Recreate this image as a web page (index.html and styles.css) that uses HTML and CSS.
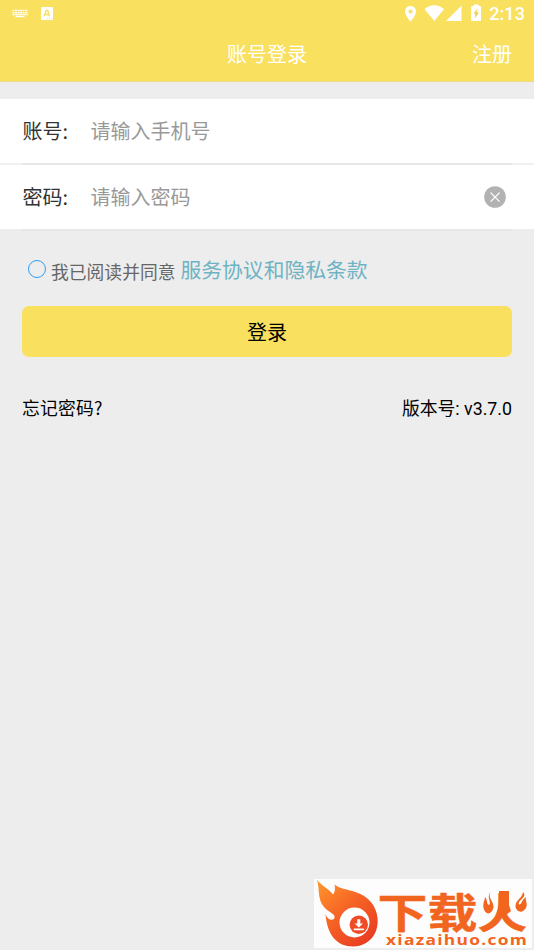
FILE: index.html
```html
<!DOCTYPE html>
<html lang="zh-CN">
<head>
<meta charset="utf-8">
<meta name="viewport" content="width=device-width, initial-scale=1">
<title>账号登录</title>
<link rel="stylesheet" href="styles.css">
</head>
<body>
<header class="header">
  <div class="status">
    <svg class="status-left" viewBox="0 0 60 27" width="60" height="27">
      <path d="M12.5 10.4H28M12.5 12.5H28" stroke="#fff" stroke-width="1.3" stroke-dasharray="1.9 .6"/>
      <path d="M12.5 14.5H28" stroke="#fff" stroke-width="1.3" stroke-dasharray="2.4 .5"/>
      <path d="M15.5 16.5H24.5" stroke="#fff" stroke-width="1.4"/>
      <rect x="41" y="7" width="12" height="13" rx=".8" fill="#fff"/>
      <path d="M44.2 16.3 46.2 10.4H47.6L49.6 16.3M45 14.5H48.8" fill="none" stroke="#f9e05f" stroke-width="1.4"/>
      <path d="M47 18.6H52" stroke="#f9e05f" stroke-width=".8" stroke-dasharray="1.2 .8"/>
    </svg>
    <div class="status-right">
      <svg viewBox="402 0 82 27" width="82" height="27">
        <path fill="#fff" fill-rule="evenodd" d="M410.5 6C407.3 6 405 8.4 405 11.4 405 15.3 410.5 21.5 410.5 21.5S416 15.3 416 11.4C416 8.4 413.7 6 410.5 6ZM410.5 9.4A2 2 0 1 1 410.5 13.4 2 2 0 0 1 410.5 9.4Z"/>
        <path fill="#fff" d="M424.5 9.2C430 3.9 438.500 3.900 444 9.200L434.300 21ZM461.500 5.500V21H446Z"/>
        <path fill="#fff" d="M473.700 4.500H478.700V6H480.200Q481 6 481 6.800V20.200Q481 21 480.200 21H472Q471.200 21 471.200 20.200V6.800Q471.200 6 472 6H473.700Z"/>
        <path fill="#f3cf55" d="M477.500 8.500 473.500 13.800H475.200L474.800 18.200 479 12.400H476.900Z"/>
      </svg>
      <span class="time">2:13</span>
    </div>
  </div>
  <nav class="nav">
    <h1 class="title">账号登录</h1>
    <a class="register">注册</a>
  </nav>
</header>
<main>
  <section class="fields">
    <div class="field"><span class="label">账号:</span><span class="hint">请输入手机号</span></div>
    <div class="line"></div>
    <div class="field"><span class="label">密码:</span><span class="hint">请输入密码</span>
      <svg class="clear" viewBox="0 0 22 22" width="22" height="22"><circle cx="11" cy="11" r="10.8" fill="#b2b2b2"/><path d="M6.600 6.600 15.600 15.600M15.600 6.600 6.600 15.600" stroke="#fff" stroke-width="1.300"/></svg>
    </div>
    <div class="line last"></div>
  </section>
  <div class="agree">
    <span class="radio"></span>
    <span class="agree-text">我已阅读并同意</span>
    <a class="terms">服务协议和隐私条款</a>
  </div>
  <button class="login">登录</button>
  <div class="links"><span class="forgot">忘记密码?</span><span>版本号: v3.7.0</span></div>
</main>
<footer class="brand">
  <svg viewBox="314 879 218 69" width="218" height="69">
    <defs>
      <linearGradient id="flame" x1="0" y1="0" x2=".8" y2="1"><stop offset="0" stop-color="#ff982d"/><stop offset=".5" stop-color="#f66325"/><stop offset="1" stop-color="#e93b22"/></linearGradient>
    </defs>
    <path fill="url(#flame)" d="M317 880C322 886 329 889 333 894.500C335 892 335.500 888 334.500 884.500C342 891 357 889 368 899C377 907 380 920 376 931C372 941 363 946.500 353 946.500C337 946.500 327 935 325.500 914C327 919 331 921 334 919C337 914 329 913 324 907C317 899 320 889 317 880Z"/>
    <circle cx="354.500" cy="922.500" r="15" fill="#fff"/>
    <circle cx="358.800" cy="924.800" r="9.200" fill="#ef4b25"/>
    <path fill="#fff" d="M357.300 919.300H360.300V923.500H363L358.800 927.500 354.600 923.500H357.300ZM353.800 928.500H364.100V930.200H353.800Z"/>
    <text class="brand-name" transform="translate(377.500 927.500) scale(1.040 .860)">下载火</text>
    <path fill="#fdfdfd" d="M478 896H497.500V909L494 917H478ZM508 896H531V917H513L508 909Z"/>
    <path fill="#f2651f" d="M499 891H509V905L511 911 506 915 497 913 499 905Z"/>
    <path fill="#f2651f" d="M490.500 892C487 899 495.500 902 493 909C491 915 485 915 483.500 908C482.500 903 485 900 485 897C488 900 486 904 489 905C492 902 486 898 490.500 892ZM523 892C528 898 517 900 519 904.500C522 905 521 900 526 897C525 901 528 903 526 908C523 913 517 913 515.500 907C515 900 522 899 523 892Z"/>
    <text class="brand-url" x="386" y="944.500" textLength="142" lengthAdjust="spacingAndGlyphs">xiazaihuo.com</text>
  </svg>
</footer>
</body>
</html>
```
FILE: styles.css
```css
* { box-sizing: border-box; }
body {
  margin: 0;
  height: 950px;
  display: flex;
  flex-direction: column;
  overflow: hidden;
  background: #ededed;
  color: #000;
  font-family: Roboto, "Noto Sans CJK SC", sans-serif;
}
svg { display: block; }
.header { height: 82px; background: #f9e05f; color: #fff; border-bottom: 1px solid #eadb86; }
.status { height: 27px; display: flex; justify-content: space-between; }
.status-right { display: flex; align-items: center; padding-right: 9px; gap: 5px; }
.time { font-size: 18px; font-weight: 500; line-height: 27px; letter-spacing: .1px; }
.nav { height: 54px; display: grid; grid-template-columns: 1fr auto 1fr; align-items: center; padding: 2px 22px 0; }
.title { grid-column: 2; margin: 0; font-size: 20px; font-weight: 400; line-height: 52px; }
.register { justify-self: end; font-size: 20px; line-height: 52px; }
.fields { margin-top: 17px; background: #fff; }
.field { height: 64px; display: flex; align-items: center; padding: 0 28px 0 22.5px; font-size: 20px; line-height: 30px; }
.hint { padding-top: 2px; }
.label { width: 68px; color: #333; font-family: "Noto Sans CJK SC", sans-serif; }
.hint { color: #999; }
.clear { margin-left: auto; }
.line { height: 2px; background: linear-gradient(90deg, #f1f1f1 22px, #e7e7e7 22px, #e7e7e7 512px, #f1f1f1 512px); }
.last { background: linear-gradient(90deg, #ededed 22px, #e7e7e7 22px, #e7e7e7 512px, #ededed 512px); }
.agree { height: 75px; display: flex; align-items: center; padding: 1px 28px 0; }
.radio { width: 18px; height: 18px; border: 1.5px solid #2a9df4; border-radius: 50%; }
.agree-text { margin: 3px 5px 0; font-size: 17.8px; color: #666; }
.terms { font-size: 20.8px; color: #6db3c3; }
.login { display: block; width: 490px; height: 51px; margin: 0 22px; padding: 0; border: 0; border-radius: 7px; background: #f9e05f; color: #000; font: inherit; font-size: 20px; }
.links { display: flex; justify-content: space-between; margin: 38px 22px 0; font-size: 17.8px; line-height: 27px; }
.forgot { margin-top: -1px; font-family: "Noto Sans CJK SC", sans-serif; letter-spacing: .2px; }
.brand { width: 218px; height: 69px; margin: auto 2px 2px auto; background: #fdfdfd; }
.brand-name { font: 700 48px "Noto Sans CJK SC", sans-serif; fill: #f2651f; stroke: #f2651f; stroke-width: .5px; }
.brand-url { font: 700 13.5px "Open Sans", sans-serif; letter-spacing: 1px; fill: #f2651f; }
```
